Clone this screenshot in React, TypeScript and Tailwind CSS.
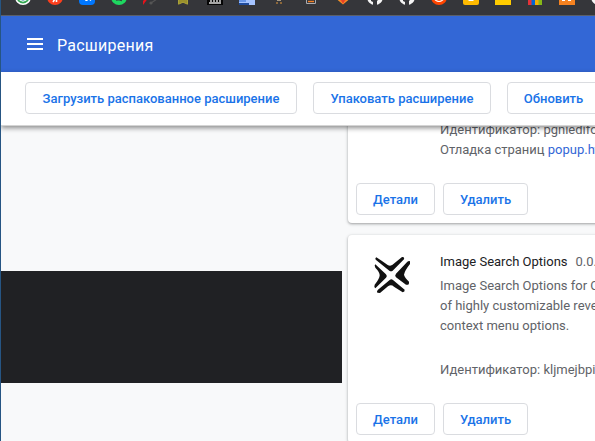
import type { ReactNode } from "react";

function OutlineButton({ children, className = "" }: { children: ReactNode; className?: string }) {
  return (
    <button
      className={`flex h-8 shrink-0 items-center justify-center whitespace-nowrap rounded border border-[#dadce0] bg-white pt-px text-[13px] font-medium text-[#1a73e8] ${className}`}
    >
      {children}
    </button>
  );
}

// Each favicon is drawn on a 16px grid; the window's edge hides its upper part.
const favicons: ReactNode[] = [
  <>
    <circle cx="8" cy="8" r="8" fill="#fff" />
    <circle cx="8" cy="8" r="6.5" fill="#34a853" />
    <path d="M4.5 10h7a4 3 0 0 1-7 0" fill="#4285f4" />
    <path d="M4.5 11Q8 13.5 11.5 11" stroke="#fff" fill="none" />
  </>,
  <>
    <circle cx="8" cy="8" r="8" fill="#fc3f1d" />
    <path d="M6 13l2-3M9.5 9v4" stroke="#fff" strokeWidth="1.6" />
  </>,
  <>
    <rect width="16" height="16" rx="4" fill="#0077ff" />
    <path d="M6 10l1 1.5h1V10m2 0l2 1.5" stroke="#fff" fill="none" strokeWidth="1.2" />
  </>,
  <>
    <circle cx="8" cy="8" r="8" fill="#1ed760" />
    <path d="M5 11.2q3-1 6 .6" stroke="#35363a" fill="none" />
  </>,
  <>
    <path d="M0 16V12l2-2h2.5z" fill="#e5121b" />
    <path d="M14 10L8 14" stroke="#555" strokeWidth="1.2" />
    <circle cx="8" cy="14" r="1.6" fill="#555" />
  </>,
  <path d="M3.5 9h9v6.2L8 13.2 3.5 15.2z" fill="#99902c" stroke="#aaa138" />,
  <>
    <rect width="16" height="16" fill="#050505" />
    <path d="M2 14h12M4 10v3m3-3v3m3-3v3m3-3v3" stroke="#ddd" strokeWidth="1.4" />
  </>,
  <>
    <rect width="16" height="16" fill="#a5c4ff" />
    <path d="M0 14h10v2H0z" fill="#1f4b9c" />
    <path d="M0 11h7v2H0z" fill="#6796e8" />
  </>,
  <>
    <path d="M6 10h4v2H6z" fill="#a89b85" />
    <path d="M5 13h2v2H5zm4 0h2v2H9z" fill="#8c6739" />
  </>,
  <>
    <path d="M3.5 8v6.5h9V8" fill="none" stroke="#a9acb1" />
    <path d="M5 12.5h6" stroke="#f48024" strokeWidth="1.4" />
  </>,
  <>
    <path d="M1.5 10h13L8 15.5z" fill="#fca326" />
    <path d="M3 10h10l-5 5z" fill="#fc6d26" />
    <path d="M5.5 10h5L8 15z" fill="#e24329" />
  </>,
  <>
    <circle cx="8" cy="8" r="8" fill="#f5f5f5" />
    <path d="M6 16v-3l-2-1V8h8v2l-2 2v4z" fill="#35363a" />
  </>,
  <>
    <circle cx="8" cy="8" r="8" fill="#f5f5f5" />
    <path d="M6 16v-3l-2-1V8h8v2l-2 2v4z" fill="#35363a" />
  </>,
  <>
    <circle cx="8" cy="8" r="8" fill="#ff4500" />
    <ellipse cx="8" cy="9" rx="5" ry="4" fill="#fff" />
    <path d="M5 10.5q3 2 6 0" stroke="#ff4500" fill="none" />
  </>,
  <>
    <rect width="16" height="16" rx="2" fill="#ffba00" />
    <path d="M5.5 9h5v3h-5z" fill="#fff" />
  </>,
  <rect width="16" height="16" fill="#ffcc00" />,
  <>
    <path d="M1 8h4v8H1z" fill="#e53238" />
    <path d="M4.5 8h3.5v8H4.5z" fill="#0064d2" />
    <path d="M8 8h4v8H8z" fill="#f5af02" />
    <path d="M11.5 8h3.5v8h-3.5z" fill="#86b817" />
  </>,
  <>
    <rect width="16" height="16" fill="#f58220" />
    <path d="M3 10h3v2H3zm6 0h3v2H9z" fill="#fff" />
  </>,
  <>
    <circle cx="8" cy="8" r="8" fill="#f7f7f7" />
    <path d="M3 10l3 4h2v-4z" fill="#f5a623" />
  </>,
];

function BookmarksBar() {
  return (
    <div className="flex h-[15px] shrink-0 gap-4 overflow-hidden bg-[#35363a] pl-[14px]">
      {favicons.map((icon, i) => (
        <svg key={i} viewBox="0 0 16 16" className="-mt-[11px] size-4 shrink-0">
          {icon}
        </svg>
      ))}
    </div>
  );
}

function CardActions() {
  return (
    <div className="flex gap-2 px-2 pb-2">
      <OutlineButton className="w-[79px]">Детали</OutlineButton>
      <OutlineButton className="w-[85px]">Удалить</OutlineButton>
    </div>
  );
}

const card =
  "flex w-[400px] flex-col justify-between rounded bg-white shadow-[0_1px_2px_rgba(60,64,67,0.3),0_1px_3px_1px_rgba(60,64,67,0.15)]";

export default function App() {
  return (
    <div className="flex h-[441px] w-[595px] flex-col overflow-hidden border-l border-[#265583] bg-[#f8f9fa] font-[Roboto,sans-serif] text-[13px] leading-5 text-[#5f6368]">
      <BookmarksBar />
      <header className="flex h-[57px] shrink-0 items-center border-t border-[#5b6069] bg-[#3367d6] pl-[26px] text-white">
        <div className="flex w-4 flex-col gap-[3px]">
          <div className="h-0.5 bg-white" />
          <div className="h-0.5 bg-white" />
          <div className="h-0.5 bg-white" />
        </div>
        <h1 className="ml-[14px] pt-[3px] text-base tracking-[0.25px]">Расширения</h1>
      </header>
      <div className="z-10 flex h-[54px] shrink-0 gap-4 border-b border-[#d4d4d4] bg-white pl-6 pt-[10px] shadow-[0_2px_5px_rgba(0,0,0,0.45)]">
        <OutlineButton className="w-[272px]">Загрузить распакованное расширение</OutlineButton>
        <OutlineButton className="w-[178px]">Упаковать расширение</OutlineButton>
        <OutlineButton className="w-[93px]">Обновить</OutlineButton>
      </div>
      <main className="flex min-h-0 flex-1 items-start">
        <div className="mt-[145px] h-28 w-[341px] shrink-0 bg-[#202124]" />
        <div className="ml-1.5 flex shrink-0 flex-col gap-3">
          <article className={`${card} -mt-1.5 h-[103px] rounded-t-none`}>
            <div className="whitespace-nowrap pl-[92px]">
              <p>Идентификатор: pgniedifoeeoap</p>
              <p>
                Отладка страниц <span className="text-[#3367d6]">popup.html</span>
              </p>
            </div>
            <CardActions />
          </article>
          <article className={`${card} h-[208px]`}>
            <div className="flex pt-[17px]">
              <svg viewBox="0 0 180 180" className="-mt-[7px] ml-[14px] size-[60px] shrink-0" fill="#111">
                <path d="M43 37Q37 41 43 46L82 77Q87 81 92 77L126 43Q128 35 120 36L97 55Q87 66 77 60Q60 48 43 37Z" />
                <path d="M40 58Q36 61 40 68Q54 82 53 92Q51 103 38 119Q35 127 40 130L72 98Q77 93 71 87Z" />
                <path d="M144 49Q141 46 136 50L102 86Q97 92 102 97L132 119Q142 122 141 110Q128 98 126 89Q128 77 144 57Z" />
                <path d="M46 143Q43 139 48 134L83 105Q88 101 93 105L128 134Q129 141 122 142L96 125Q87 117 78 124L54 144Z" />
              </svg>
              <div className="ml-[18px] whitespace-nowrap">
                <div className="mb-1">
                  <span className="text-[#202124]">Image Search Options</span>
                  <span className="ml-2">0.0.4.8</span>
                </div>
                <p>Image Search Options for Chrome</p>
                <p>of highly customizable reverse</p>
                <p>context menu options.</p>
                <p className="mt-6">Идентификатор: kljmejbpilkadik</p>
              </div>
            </div>
            <CardActions />
          </article>
        </div>
      </main>
    </div>
  );
}
